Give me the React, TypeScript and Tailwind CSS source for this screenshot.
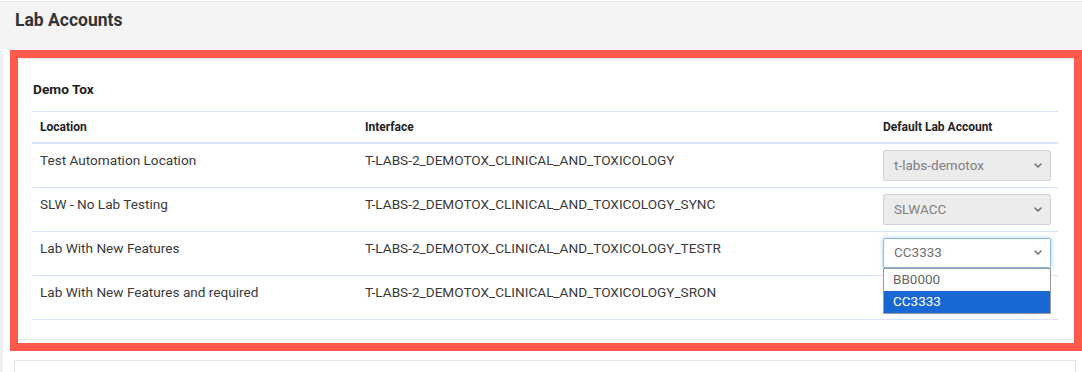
import React from "react";

const rows = [
  { loc: "Test Automation Location", iface: "T-LABS-2_DEMOTOX_CLINICAL_AND_TOXICOLOGY", acct: "t-labs-demotox", state: "disabled" },
  { loc: "SLW - No Lab Testing", iface: "T-LABS-2_DEMOTOX_CLINICAL_AND_TOXICOLOGY_SYNC", acct: "SLWACC", state: "disabled" },
  { loc: "Lab With New Features", iface: "T-LABS-2_DEMOTOX_CLINICAL_AND_TOXICOLOGY_TESTR", acct: "CC3333", state: "open" },
  { loc: "Lab With New Features and required", iface: "T-LABS-2_DEMOTOX_CLINICAL_AND_TOXICOLOGY_SRON", acct: "", state: "none" },
];

function Chevron() {
  return (
    <svg width="8" height="5" viewBox="0 0 8 5" className="shrink-0">
      <path d="M1 1 L4 4 L7 1" fill="none" stroke="#666" strokeWidth="1.4" strokeLinecap="round" strokeLinejoin="round" />
    </svg>
  );
}

function SelectBox({ value, state }: { value: string; state: string }) {
  if (state === "none") return null;
  if (state === "disabled") {
    return (
      <div className="w-[168px] h-[31px] bg-[#ececec] border border-[#d3d3d3] rounded-[2px] flex items-center justify-between pl-[10px] pr-[8px] text-[13.5px] text-[#808080]">
        <span>{value}</span>
        <Chevron />
      </div>
    );
  }
  return (
    <div className="relative w-[168px]">
      <div className="w-[168px] h-[30px] bg-white border border-[#8fbbea] shadow-[0_0_4px_rgba(102,175,233,0.6)] rounded-[2px] flex items-center justify-between pl-[10px] pr-[8px] text-[13.5px] text-[#707070]">
        <span>{value}</span>
        <Chevron />
      </div>
      <div className="absolute left-0 top-[30px] w-[168px] bg-white border border-[#9a9a9a] text-[13.5px] z-10">
        <div className="h-[22px] flex items-center pl-[9px] text-[#666]">BB0000</div>
        <div className="h-[22px] flex items-center pl-[9px] bg-[#1967d2] text-white">CC3333</div>
      </div>
    </div>
  );
}

export default function App() {
  return (
    <div className="w-[1082px] h-[372px] bg-white overflow-hidden text-[#333]" style={{ fontFamily: "Roboto, 'Liberation Sans', sans-serif" }}>
      <div className="h-[48px] mt-px bg-[#f4f4f4] border-t border-[#e6e6e6] pl-[15px] pt-[7px]">
        <span className="text-[17.5px] leading-[22px] font-bold text-[#333]">Lab Accounts</span>
      </div>
      <div className="border-l-[3px] border-[#f0f0f0] h-[323px]">
        <div className="mt-px ml-[7px] w-[1072px] h-[301px] border-[8px] border-[#ff5a4b] bg-white">
          <div className="border-t border-b border-[#e8e8e8] h-[282px] pt-[21px] pl-[14px] pr-[16px]">
            <div className="text-[13.7px] font-bold leading-[18px] pl-px text-[#222]">Demo Tox</div>
            <table className="mt-[13px] w-full border-collapse text-[13.6px] text-[#3a3a3a]">
              <thead>
                <tr className="border-t border-[#d6e6f8] border-b-2">
                  <th className="text-left font-bold text-[12px] text-[#222] h-[31px] pl-[8px] w-[325px]">Location</th>
                  <th className="text-left font-bold text-[12px] text-[#222] pl-[8px] w-[518px]">Interface</th>
                  <th className="text-left font-bold text-[12px] text-[#222] pl-[8px]">Default Lab Account</th>
                </tr>
              </thead>
              <tbody>
                {rows.map((r, i) => (
                  <tr key={i} className="border-b border-[#d6e6f8]">
                    <td className="align-top pl-[8px] pt-[7px] pb-[7px] leading-[18px] h-[44px]">{r.loc}</td>
                    <td className="align-top pl-[8px] pt-[7px] pb-[7px] leading-[18px]">{r.iface}</td>
                    <td className="align-top pl-[8px] pt-[6px] pb-[6px]">
                      <SelectBox value={r.acct} state={r.state} />
                    </td>
                  </tr>
                ))}
              </tbody>
            </table>
          </div>
        </div>
        <div className="mt-[9px] ml-[11px] w-[1062px] h-[40px] border border-[#e6e6e6] bg-white" />
      </div>
    </div>
  );
}
